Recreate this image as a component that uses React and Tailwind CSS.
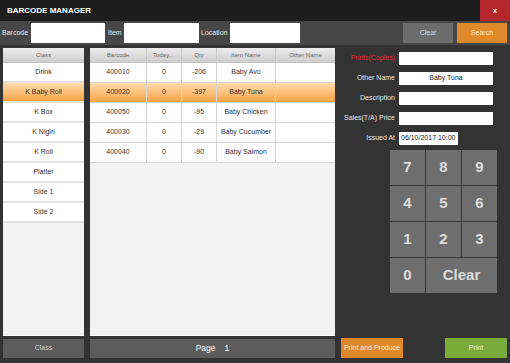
import React from 'react';

const classes = ['Drink', 'K Baby Roll', 'K Box', 'K Nigiri', 'K Roll', 'Platter', 'Side 1', 'Side 2'];

const rows = [
    ['400010', '0', '-206', 'Baby Avo', ''],
    ['400020', '0', '-397', 'Baby Tuna', ''],
    ['400050', '0', '-95', 'Baby Chicken', ''],
    ['400030', '0', '-29', 'Baby Cucumber', ''],
    ['400040', '0', '-90', 'Baby Salmon', ''],
];

const cols = ['w-[57px]', 'w-[35px]', 'w-[35px]', 'w-[59px]', 'flex-1'];
const heads = ['Barcode', 'Today....', 'Qty', 'Item Name', 'Other Name'];

const selected = 'bg-gradient-to-b from-[#fddcad] to-[#f8a33f]';

function FormRow({ label, value, red, short }) {
    return (
        <div className="flex items-center h-[13px]">
            <div className={`w-[60px] text-right text-[7px] ${red ? 'text-[#e8262a]' : 'text-[#e6e6e6]'}`}>{label}</div>
            <div
                className={`ml-[4px] h-[13px] bg-white text-[7px] text-[#222] flex items-center ${short ? 'w-[59px] pl-[2px]' : 'w-[94px] justify-center'}`}
            >
                {value}
            </div>
        </div>
    );
}

export default function App() {
    return (
        <div className="w-[510px] h-[363px] bg-[#333333] flex flex-col font-['Liberation_Sans',Arial,sans-serif] overflow-hidden">
            {/* title */}
            <div className="h-[21px] bg-[#1d1d1d] flex items-center justify-between">
                <div className="pl-[7px] text-[8px] font-bold text-white">BARCODE MANAGER</div>
                <div className="w-[30px] h-[21px] bg-[#b3262c] flex items-center justify-center text-[8px] font-bold text-white">x</div>
            </div>

            {/* search bar */}
            <div className="h-[24px] bg-[#474747] flex items-center">
                <span className="pl-[2px] w-[31px] text-[7px] text-[#e8e8e8]">Barcode</span>
                <div className="w-[74px] h-[20px] bg-white" />
                <span className="w-[19px] pl-[3px] text-[7px] text-[#e8e8e8]">Item</span>
                <div className="w-[75px] h-[20px] bg-white" />
                <span className="w-[31px] pl-[2px] text-[7px] text-[#e8e8e8]">Location</span>
                <div className="w-[70px] h-[20px] bg-white" />
                <div className="ml-[103px] w-[50px] h-[20px] bg-[#6c6c6c] text-[7px] text-[#d8d8d8] flex items-center justify-center">Clear</div>
                <div className="ml-[4px] w-[50px] h-[20px] bg-[#e0892b] text-[7px] text-[#fbe9d4] flex items-center justify-center">Search</div>
            </div>

            {/* body */}
            <div className="flex-1 flex pt-[3px] pb-[5px]">
                {/* class list */}
                <div className="ml-[3px] w-[81px] flex flex-col">
                    <div className="flex-1 bg-[#f2f2f2] border-b border-white flex flex-col">
                        <div className="h-[15px] bg-gradient-to-b from-[#ededed] to-[#cdcdcd] border-b border-[#c4c4c4] flex items-center justify-center text-[6px] text-[#666]">Class</div>
                        {classes.map((c, i) => (
                            <div
                                key={c}
                                className={`h-[20px] border-b-2 border-[#e2e2e2] flex items-center justify-center text-[7px] text-[#333] ${i === 1 ? selected : 'bg-white'}`}
                            >
                                {c}
                            </div>
                        ))}
                    </div>
                    <div className="mt-[3px] h-[19px] bg-[#5c5c5c] flex items-center justify-center text-[7px] text-[#d0d0d0]">Class</div>
                </div>

                {/* item table */}
                <div className="ml-[6px] w-[245px] flex flex-col">
                    <div className="flex-1 bg-[#f2f2f2] border-b border-white flex flex-col">
                        <div className="h-[15px] flex bg-gradient-to-b from-[#ededed] to-[#cdcdcd] border-b border-[#c4c4c4]">
                            {heads.map((h, i) => (
                                <div key={h} className={`${cols[i]} flex items-center justify-center text-[6px] text-[#666] ${i < 4 ? 'border-r border-[#c8c8c8]' : ''}`}>
                                    {h}
                                </div>
                            ))}
                        </div>
                        {rows.map((r, ri) => (
                            <div key={r[0]} className={`h-[20px] flex border-b border-[#d6d6d6] ${ri === 1 ? selected : 'bg-white'}`}>
                                {r.map((v, i) => (
                                    <div key={i} className={`${cols[i]} flex items-center justify-center text-[7px] text-[#333] ${i < 4 ? 'border-r border-[#d6d6d6]' : ''}`}>
                                        {v}
                                    </div>
                                ))}
                            </div>
                        ))}
                    </div>
                    <div className="mt-[3px] h-[19px] bg-[#5c5c5c] flex items-center justify-center text-[8.5px] text-white">
                        <span>Page</span>
                        <span className="ml-[9px]">1</span>
                    </div>
                </div>

                {/* right panel */}
                <div className="flex-1 flex flex-col">
                    <div className="mt-[4px] flex flex-col gap-[7px]">
                        <FormRow label="Prints(Copies)" red />
                        <FormRow label="Other Name" value="Baby Tuna" />
                        <FormRow label="Description" />
                        <FormRow label="Sales(T/A) Price" />
                        <FormRow label="Issued At" value="06/10/2017 10:00" short />
                    </div>

                    <div className="mt-[5px] ml-[55px] w-[107px] grid grid-cols-3 gap-px bg-[#3a3a3a]">
                        {['7', '8', '9', '4', '5', '6', '1', '2', '3'].map((d) => (
                            <div key={d} className="h-[35px] bg-[#6e6e6e] flex items-center justify-center text-[15px] font-bold text-[#dcdcdc]">
                                {d}
                            </div>
                        ))}
                        <div className="h-[35px] bg-[#6e6e6e] flex items-center justify-center text-[15px] font-bold text-[#dcdcdc]">0</div>
                        <div className="col-span-2 h-[35px] bg-[#6e6e6e] flex items-center justify-center text-[15px] font-bold text-[#dcdcdc]">Clear</div>
                    </div>

                    <div className="flex-1" />
                    <div className="h-[20px] flex">
                        <div className="ml-[6px] w-[62px] bg-[#e0892b] flex items-center justify-center text-[7px] text-[#fbe9d4]">Print and Produce</div>
                        <div className="ml-[42px] w-[62px] bg-[#79ab3b] flex items-center justify-center text-[7px] text-[#eef5e0]">Print</div>
                    </div>
                </div>
            </div>
        </div>
    );
}
